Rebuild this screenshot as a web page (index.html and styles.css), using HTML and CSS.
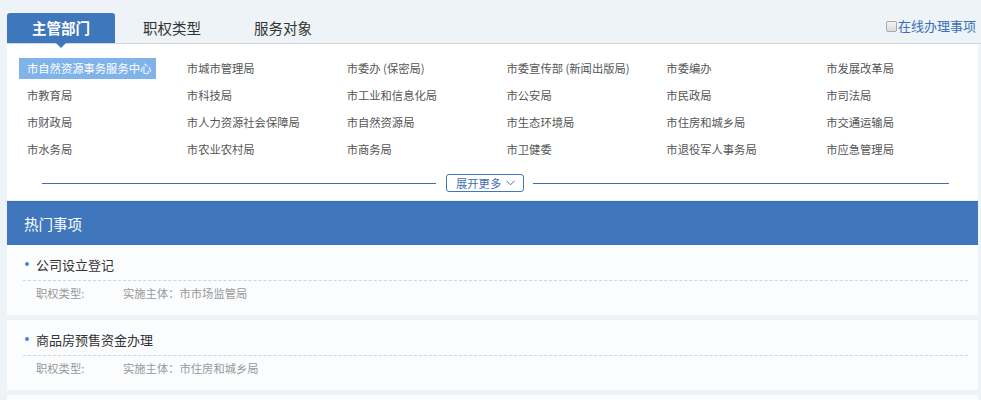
FILE: index.html
```html
<!DOCTYPE html>
<html lang="zh-CN">
<head>
<meta charset="utf-8">
<title>事项导航</title>
<link rel="stylesheet" href="styles.css">
</head>
<body>
<div class="page">
  <div class="tabs">
    <div class="tab active">主管部门</div>
    <div class="tab">职权类型</div>
    <div class="tab">服务对象</div>
    <label class="online"><span class="box"></span>在线办理事项</label>
  </div>
  <div class="panel">
    <div class="grid">
      <span class="dept selected">市自然资源事务服务中心</span>
      <span class="dept">市城市管理局</span>
      <span class="dept">市委办 (保密局)</span>
      <span class="dept">市委宣传部 (新闻出版局)</span>
      <span class="dept">市委编办</span>
      <span class="dept">市发展改革局</span>
      <span class="dept">市教育局</span>
      <span class="dept">市科技局</span>
      <span class="dept">市工业和信息化局</span>
      <span class="dept">市公安局</span>
      <span class="dept">市民政局</span>
      <span class="dept">市司法局</span>
      <span class="dept">市财政局</span>
      <span class="dept">市人力资源社会保障局</span>
      <span class="dept">市自然资源局</span>
      <span class="dept">市生态环境局</span>
      <span class="dept">市住房和城乡局</span>
      <span class="dept">市交通运输局</span>
      <span class="dept">市水务局</span>
      <span class="dept">市农业农村局</span>
      <span class="dept">市商务局</span>
      <span class="dept">市卫健委</span>
      <span class="dept">市退役军人事务局</span>
      <span class="dept">市应急管理局</span>
    </div>
    <div class="expand-row">
      <span class="line left"></span>
      <span class="expand">展开更多<svg class="chev" width="9" height="6" viewBox="0 0 9 6"><path d="M0.5 0.8 L4.5 4.8 L8.5 0.8" fill="none" stroke="#3f6fae" stroke-width="1"/></svg></span>
      <span class="line right"></span>
    </div>
  </div>
  <div class="hot-head">热门事项</div>
  <div class="card">
    <div class="title"><span class="dot"></span>公司设立登记</div>
    <div class="meta"><span class="type">职权类型:</span><span>实施主体：市市场监管局</span></div>
  </div>
  <div class="card">
    <div class="title"><span class="dot"></span>商品房预售资金办理</div>
    <div class="meta"><span class="type">职权类型:</span><span>实施主体：市住房和城乡局</span></div>
  </div>
  <div class="card"></div>
</div>
</body>
</html>
```

FILE: styles.css
```css
html, body {
  margin: 0;
  padding: 0;
  background: #edf3f7;
  font-family: "Microsoft YaHei", "Noto Sans CJK SC", "Noto Sans", sans-serif;
  overflow: hidden;
}

.page {
  padding: 0 3px 0 7px;
}

.tabs {
  display: flex;
  align-items: flex-end;
  height: 43px;
  border-bottom: 1px solid #cfd6dd;
  margin-right: -3px;
}

.tab {
  position: relative;
  width: 108px;
  height: 30px;
  line-height: 30px;
  margin-right: 3px;
  text-align: center;
  font-size: 14.5px;
  color: #333;
}

.tab.active {
  background: #3f77bc;
  color: #fff;
  font-weight: bold;
  border-radius: 3px 3px 0 0;
}

.tab.active::after {
  content: "";
  position: absolute;
  left: 50%;
  bottom: -5px;
  margin-left: -5px;
  border-left: 5px solid transparent;
  border-right: 5px solid transparent;
  border-top: 5px solid #3f77bc;
}

.online {
  margin-left: auto;
  margin-right: 5px;
  margin-bottom: 8px;
  display: flex;
  align-items: center;
  font-size: 13px;
  line-height: 18px;
  color: #3a6fb5;
}

.box {
  width: 9px;
  height: 9px;
  border: 1px solid #a9a9a9;
  border-radius: 2px;
  background: linear-gradient(#f4f4f4, #dcdcdc);
  margin-right: 1px;
}

.panel {
  background: #fff;
  padding: 14px 0 8px 12px;
}

.grid {
  display: grid;
  grid-template-columns: repeat(6, 1fr);
  row-gap: 6px;
  justify-items: start;
}

.dept {
  height: 21px;
  line-height: 21px;
  padding: 0 8px;
  font-size: 11.3px;
  color: #555;
  white-space: nowrap;
}

.dept.selected {
  background: #80b3e8;
  color: #fff;
  padding: 0 5px 0 8px;
}

.expand-row {
  display: flex;
  align-items: center;
  margin-top: 14px;
  padding: 0 29px 0 23px;
}

.line {
  height: 1px;
  background: #3f6fae;
}

.line.left {
  flex: 394 1 0;
  margin-right: 10px;
}

.line.right {
  flex: 416 1 0;
  margin-left: 9px;
}

.expand {
  display: flex;
  align-items: center;
  box-sizing: border-box;
  width: 78px;
  height: 18px;
  padding-left: 9px;
  border: 1px solid #3f77bc;
  border-radius: 3px;
  font-size: 11.3px;
  color: #3f6fae;
}

.chev {
  margin-left: 5px;
}

.hot-head {
  margin-top: 1px;
  height: 43px;
  line-height: 43px;
  background: #4077bc;
  border-top: 1px solid #3a6fb4;
  padding-left: 17px;
  font-size: 14.5px;
  color: #fff;
}

.card {
  background: #fafcfd;
  padding: 9px 10px 10px 16px;
  margin-bottom: 5px;
}

.title {
  display: flex;
  align-items: center;
  height: 20px;
  padding: 0 0 6px 2px;
  border-bottom: 1px dashed #d2d5d8;
  font-size: 13px;
  color: #333;
}

.dot {
  width: 4px;
  height: 4px;
  border-radius: 50%;
  background: #4a86d0;
  margin-right: 7px;
}

.meta {
  height: 24px;
  line-height: 24px;
  padding-left: 13px;
  font-size: 11.3px;
  color: #999;
}

.type {
  display: inline-block;
  width: 87px;
}
```
